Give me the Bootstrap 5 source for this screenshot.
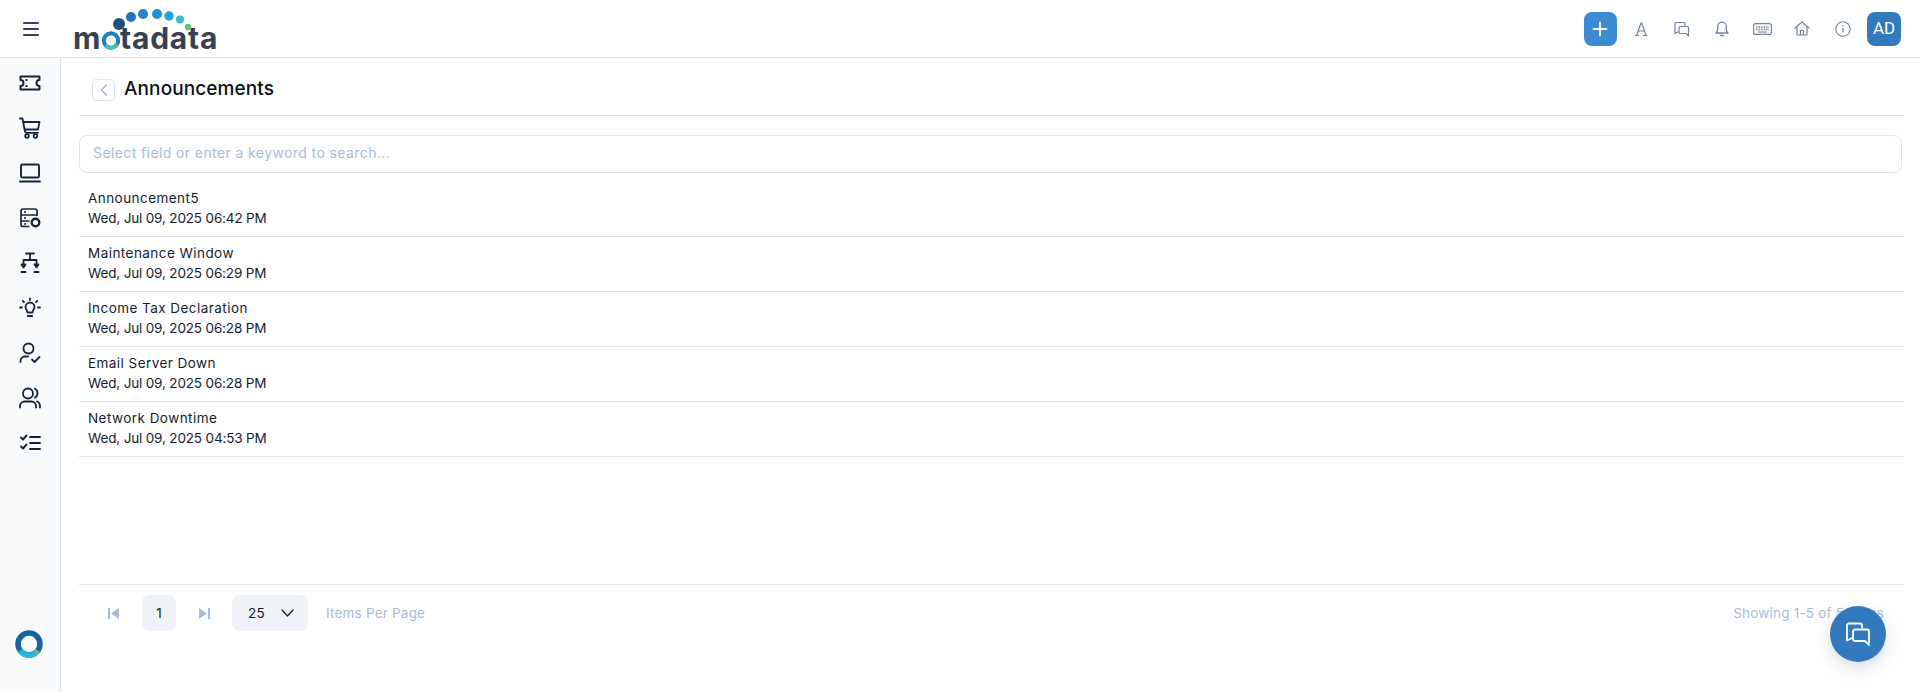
<!DOCTYPE html>
<html lang="en">
<head>
<meta charset="utf-8">
<title>Announcements</title>
<link href="https://cdn.jsdelivr.net/npm/bootstrap@5.3.0/dist/css/bootstrap.min.css" rel="stylesheet">
<style>
html,body{height:692px;overflow:hidden;background:#fff}
body{font-family:"Inter","Noto Sans",sans-serif;font-size:13.5px;color:#131c2e}
.topbar{height:58px;border-bottom:1px solid #dfe5ee}
.burger{width:61px}
.logo-svg{display:block;margin-left:12px}
.logo-word{font-family:"Inter",sans-serif;font-weight:700;font-size:30px;fill:#364153;letter-spacing:.8px}
.tool-slot{width:40.4px;height:34px;color:#72849c}
.tool-plus{width:33px;height:34px;background:#3d8bd3;color:#fff;border-radius:8px;margin-right:4px}
.tool-user{width:34px;height:34px;background:#3279be;color:#fff;border-radius:8px;font-family:"Roboto",sans-serif;font-size:17px;margin-left:4px}
.tools{padding-right:19px}
.shell{height:634px}
.sidenav{width:61px;background:#f8fafc;border-right:1px solid #dfe5ee;padding-top:2px;padding-bottom:34px}
.side-slot{height:45px;color:#16243a}
.ring-slot{height:28px;padding-right:3px}
.content{padding:0 16px 0 18px;min-width:0}
.titlebar{height:58px;border-bottom:1px solid #dfe5ee;padding:6px 0 0 13px}
.back-btn{width:23px;height:22px;border:1px solid #dfe5ee;border-radius:4px;color:#9fb2cc;margin-right:9px}
.page-title{font-family:"Inter",sans-serif;font-size:19px;font-weight:500;color:#0a101c;margin:0;letter-spacing:.1px}
.searchbox{margin:19px 2px 9px 0;height:38px;border:1px solid #dfe5ee;border-radius:8px;padding:0 13px 3px;color:#a9bcd6;font-size:14px;letter-spacing:.4px}
.ann-row{height:55px;border-bottom:1px solid #dfe5ee;padding:6px 9px 0;line-height:20px}
.ann-name{letter-spacing:.45px}
.ann-date{letter-spacing:-.16px}
.pager{height:108px;border-top:1px solid #dfe5ee;padding:10px 20px 0 0;color:#a9bcd6;letter-spacing:.2px}
.pager-item{height:36px}
.pg-first{margin-left:29px;width:11px;margin-right:23px;color:#a9bcd6}
.pg-num{width:34px;background:#eff2f7;border-radius:7px;color:#131c2e}
.pg-last{margin-left:23px;width:11px;margin-right:22px;color:#a9bcd6}
.pg-size{width:76px;background:#eff2f7;border-radius:7px;color:#131c2e;padding:0 14px 0 16px;margin-right:18px}
.fab{position:fixed;left:1830px;top:606px;width:56px;height:56px;border-radius:50%;background:#3279be;color:#fff;box-shadow:0 6px 16px rgba(30,50,80,.16)}
</style>
</head>
<body>
<header class="topbar d-flex align-items-center">
  <div class="burger d-flex justify-content-center">
    <svg width="18" height="16" viewBox="0 0 18 16" fill="none" stroke="#364153" stroke-width="2" stroke-linecap="round"><path d="M2 2h14M2 8h14M2 14h14"/></svg>
  </div>
  <svg class="logo-svg" width="146" height="57" viewBox="0 0 146 57">
    <text class="logo-word" y="49"><tspan x="0">m</tspan><tspan x="28" fill="transparent">o</tspan><tspan x="47">tadata</tspan></text>
    <circle cx="38" cy="40.500" r="7.200" fill="none" stroke="#1b7fb8" stroke-width="4"/>
    <path d="M32.500 45.500a7.200 7.200 0 0 0 9.500.8" fill="none" stroke="#3fc0d0" stroke-width="4"/>
    <path d="M42 46.300a7.200 7.200 0 0 0 2-2" fill="none" stroke="#5cc57f" stroke-width="4"/>
    <circle cx="46" cy="24" r="6" fill="#24507f"/>
    <circle cx="58" cy="17" r="5" fill="#1f74b4"/>
    <circle cx="70" cy="14" r="5" fill="#1f86c8"/>
    <circle cx="84" cy="14" r="5" fill="#1f8fd0"/>
    <circle cx="96" cy="16" r="4.700" fill="#22a5d8"/>
    <circle cx="107" cy="19.500" r="4" fill="#38bdd0"/>
    <circle cx="115" cy="27" r="3.200" fill="#5cc57f"/>
  </svg>
  <div class="tools d-flex align-items-center ms-auto">
    <div class="tool-plus d-flex align-items-center justify-content-center">
      <svg width="16" height="16" viewBox="0 0 16 16" stroke="#fff" stroke-width="1.800" stroke-linecap="round"><path d="M8 1.500v13M1.500 8h13"/></svg>
    </div>
    <div class="tool-slot d-flex align-items-center justify-content-center">
      <svg width="16" height="16" viewBox="0 0 16 16" fill="none" stroke="currentColor" stroke-width="1.200"><path d="M2 14.500h4M10 14.500h4.500M3.500 14.500 8 2h.6l4.500 12.500M5 10h6.500"/></svg>
    </div>
    <div class="tool-slot d-flex align-items-center justify-content-center">
      <svg width="17" height="16" viewBox="0 0 17 16" fill="none" stroke="currentColor" stroke-width="1.200" stroke-linejoin="round"><path d="M5.500 10.500 2 12.500V3a1.500 1.500 0 0 1 1.500-1.500h7A1.500 1.500 0 0 1 12 3v2"/><path d="M7 5.500h7.500A1 1 0 0 1 15.500 6.500v8.500l-2.500-2.500H7a1 1 0 0 1-1-1V6.500a1 1 0 0 1 1-1Z"/></svg>
    </div>
    <div class="tool-slot d-flex align-items-center justify-content-center">
      <svg width="16" height="17" viewBox="0 0 16 17" fill="none" stroke="currentColor" stroke-width="1.300" stroke-linecap="round" stroke-linejoin="round"><path d="M2 13h12c-1.200-1-1.700-2-1.700-3.500V6.500a4.300 4.300 0 0 0-8.600 0v3C3.700 11 3.200 12 2 13Z"/><path d="M6.500 15.500h3"/></svg>
    </div>
    <div class="tool-slot d-flex align-items-center justify-content-center">
      <svg width="19" height="12" viewBox="0 0 19 12" fill="none" stroke="currentColor" stroke-width="1.100"><rect x=".6" y=".6" width="17.800" height="10.800" rx="2"/><path stroke-dasharray="1.500 1" stroke-width="1.300" d="M3 4h13M3 6.500h13"/><path d="M5 9h9"/></svg>
    </div>
    <div class="tool-slot d-flex align-items-center justify-content-center">
      <svg width="16" height="15" viewBox="0 0 16 15" fill="none" stroke="currentColor" stroke-width="1.200" stroke-linejoin="round" stroke-linecap="round"><path d="M1 7 8 1l7 6M3 5.500V14h10V5.500M6.500 14V9.500h3V14"/></svg>
    </div>
    <div class="tool-slot d-flex align-items-center justify-content-center">
      <svg width="16" height="16" viewBox="0 0 16 16" fill="none" stroke="currentColor" stroke-width="1.100"><circle cx="8" cy="8" r="7.200"/><path stroke-width="1.300" d="M8 7v4.500M8 4.300v1.200"/></svg>
    </div>
    <div class="tool-user d-flex align-items-center justify-content-center">AD</div>
  </div>
</header>
<div class="shell d-flex">
  <nav class="sidenav d-flex flex-column flex-shrink-0">
    <div class="side-slot d-flex align-items-center justify-content-center">
      <svg width="22" height="16" viewBox="0 0 22 16" fill="none" stroke="currentColor" stroke-width="2" stroke-linejoin="round"><path d="M1.500 1.500h19v3.500a3 3 0 0 0 0 6v3.500h-19V11a3 3 0 0 0 0-6Z"/><path d="M7.500 4v2M7.500 10v2"/></svg>
    </div>
    <div class="side-slot d-flex align-items-center justify-content-center">
      <svg width="22" height="22" viewBox="0 0 22 22" fill="none" stroke="currentColor" stroke-width="1.800" stroke-linecap="round" stroke-linejoin="round"><path d="M1 1.500h2.500L6 14.500c.2.900.8 1.300 1.600 1.300h11.400"/><path d="M4.200 5h16.300l-1.500 7.500H5.600"/><circle cx="8" cy="19" r="1.800"/><circle cx="16.500" cy="19" r="1.800"/></svg>
    </div>
    <div class="side-slot d-flex align-items-center justify-content-center">
      <svg width="22" height="20" viewBox="0 0 22 20" fill="none" stroke="currentColor" stroke-width="1.900" stroke-linejoin="round"><rect x="2" y="1.500" width="18" height="13" rx="1.500"/><path stroke-linecap="round" d="M1 18.500h20"/></svg>
    </div>
    <div class="side-slot d-flex align-items-center justify-content-center">
      <svg width="21" height="20" viewBox="0 0 21 20" fill="none" stroke="currentColor" stroke-width="1.700" stroke-linejoin="round"><path d="M9.500 18.500H3a2 2 0 0 1-2-2V3a2 2 0 0 1 2-2h12a2 2 0 0 1 2 2v5M1 7h16M1 13h8.500M4 4h2M4 10h2M4 16h2"/><circle cx="15.500" cy="14.500" r="3.800" stroke-width="2.400"/></svg>
    </div>
    <div class="side-slot d-flex align-items-center justify-content-center">
      <svg width="22" height="22" viewBox="0 0 22 22" fill="none" stroke="currentColor" stroke-width="1.800" stroke-linecap="round" stroke-linejoin="round"><path d="M7 1.500h8M11 1.500V8M4.500 13V8h13v5"/><path fill="currentColor" d="m2.500 12.500 2 3 2-3ZM15.500 12.500l2 3 2-3Z"/><path stroke-width="2.200" d="M2.500 20h4M15.500 20h4"/></svg>
    </div>
    <div class="side-slot d-flex align-items-center justify-content-center">
      <svg width="22" height="22" viewBox="0 0 22 22" fill="none" stroke="currentColor" stroke-width="1.800" stroke-linecap="round" stroke-linejoin="round"><path d="M8.500 15.500c0-2-2-3-2-5.500a4.500 4.500 0 0 1 9 0c0 2.500-2 3.500-2 5.500Z"/><path stroke-width="2.200" d="M9 19h4"/><path d="M11 1.500v1.500M3.800 4l1.200 1.200M18.200 4 17 5.200M1 10.500h2M19 10.500h2"/></svg>
    </div>
    <div class="side-slot d-flex align-items-center justify-content-center">
      <svg width="22" height="22" viewBox="0 0 22 22" fill="none" stroke="currentColor" stroke-width="1.800" stroke-linecap="round" stroke-linejoin="round"><circle cx="9.500" cy="6.500" r="5"/><path d="M1.500 20v-1c0-2.500 2-4.500 4.500-4.500h3"/><path d="m13 17.500 2.500 2.500 5-5"/></svg>
    </div>
    <div class="side-slot d-flex align-items-center justify-content-center">
      <svg width="22" height="22" viewBox="0 0 22 22" fill="none" stroke="currentColor" stroke-width="1.800" stroke-linecap="round" stroke-linejoin="round"><circle cx="9" cy="6.500" r="5"/><path d="M1 20.500v-1.500c0-2.500 2-4.500 4.500-4.500h7c2.500 0 4.500 2 4.500 4.500v1.500M16 1.800c2 1 2.500 2.800 2.500 4.500s-.6 3.300-2.500 4.300M18 14.500c2 .7 3 2.200 3 4.500v1.500"/></svg>
    </div>
    <div class="side-slot d-flex align-items-center justify-content-center">
      <svg width="21" height="18" viewBox="0 0 21 18" fill="none" stroke="currentColor" stroke-width="1.900" stroke-linecap="round" stroke-linejoin="round"><path d="m1 3.500 2 2 3.500-4M1 12.500l2 2 3.500-4M10 3h10M10 9h10M10 15h10"/></svg>
    </div>
    <div class="ring-slot d-flex align-items-center justify-content-center mt-auto">
      <svg width="28" height="28" viewBox="0 0 28 28" fill="none" stroke-width="5.500"><circle cx="14" cy="14" r="11" stroke="#17639c"/><path stroke="#2fb3dc" d="M5 20.500a11 11 0 0 0 15 3"/><path stroke="#5cc57f" d="M20 23.500a11 11 0 0 0 3-3"/></svg>
    </div>
  </nav>
  <main class="content flex-grow-1 d-flex flex-column">
    <div class="titlebar d-flex align-items-center flex-shrink-0">
      <div class="back-btn d-flex align-items-center justify-content-center">
        <svg width="8" height="12" viewBox="0 0 8 12" fill="none" stroke="currentColor" stroke-width="1.200" stroke-linecap="round" stroke-linejoin="round"><path d="M6.500 1 1.500 6l5 5"/></svg>
      </div>
      <h1 class="page-title">Announcements</h1>
    </div>
    <div class="searchbox d-flex align-items-center flex-shrink-0">Select field or enter a keyword to search...</div>
    <div class="flex-grow-1">
      <div class="ann-row"><div class="ann-name">Announcement5</div><div class="ann-date">Wed, Jul 09, 2025 06:42 PM</div></div>
      <div class="ann-row"><div class="ann-name">Maintenance Window</div><div class="ann-date">Wed, Jul 09, 2025 06:29 PM</div></div>
      <div class="ann-row"><div class="ann-name">Income Tax Declaration</div><div class="ann-date">Wed, Jul 09, 2025 06:28 PM</div></div>
      <div class="ann-row"><div class="ann-name">Email Server Down</div><div class="ann-date">Wed, Jul 09, 2025 06:28 PM</div></div>
      <div class="ann-row"><div class="ann-name">Network Downtime</div><div class="ann-date">Wed, Jul 09, 2025 04:53 PM</div></div>
    </div>
    <div class="pager d-flex align-items-start flex-shrink-0">
      <div class="pager-item pg-first d-flex align-items-center">
        <svg width="11" height="11" viewBox="0 0 11 11" fill="currentColor"><rect x="0" y="0" width="2" height="11"/><path d="M11 0v11L3 5.500Z"/></svg>
      </div>
      <div class="pager-item pg-num d-flex align-items-center justify-content-center">1</div>
      <div class="pager-item pg-last d-flex align-items-center">
        <svg width="11" height="11" viewBox="0 0 11 11" fill="currentColor"><rect x="9" y="0" width="2" height="11"/><path d="M0 0v11l8-5.500Z"/></svg>
      </div>
      <div class="pager-item pg-size d-flex align-items-center justify-content-between">
        <span>25</span>
        <svg width="13" height="8" viewBox="0 0 13 8" fill="none" stroke="currentColor" stroke-width="1.300" stroke-linecap="round" stroke-linejoin="round"><path d="m1 1 5.500 6L12 1"/></svg>
      </div>
      <div class="pager-item d-flex align-items-center">Items Per Page</div>
      <div class="pager-item d-flex align-items-center ms-auto">Showing 1-5 of 5 Items</div>
    </div>
  </main>
</div>
<div class="fab d-flex align-items-center justify-content-center">
  <svg width="26" height="25" viewBox="0 0 26 25" fill="none" stroke="currentColor" stroke-width="1.800" stroke-linejoin="round"><path d="M8 15.500 2 18.500V3.500A2 2 0 0 1 4 1.500h11a2 2 0 0 1 2 2v3"/><path d="M10 7.500h12a2 2 0 0 1 2 2v13.500l-4-4H10a2 2 0 0 1-2-2V9.500a2 2 0 0 1 2-2Z"/></svg>
</div>
<script src="https://cdn.jsdelivr.net/npm/bootstrap@5.3.0/dist/js/bootstrap.bundle.min.js"></script>
</body>
</html>
